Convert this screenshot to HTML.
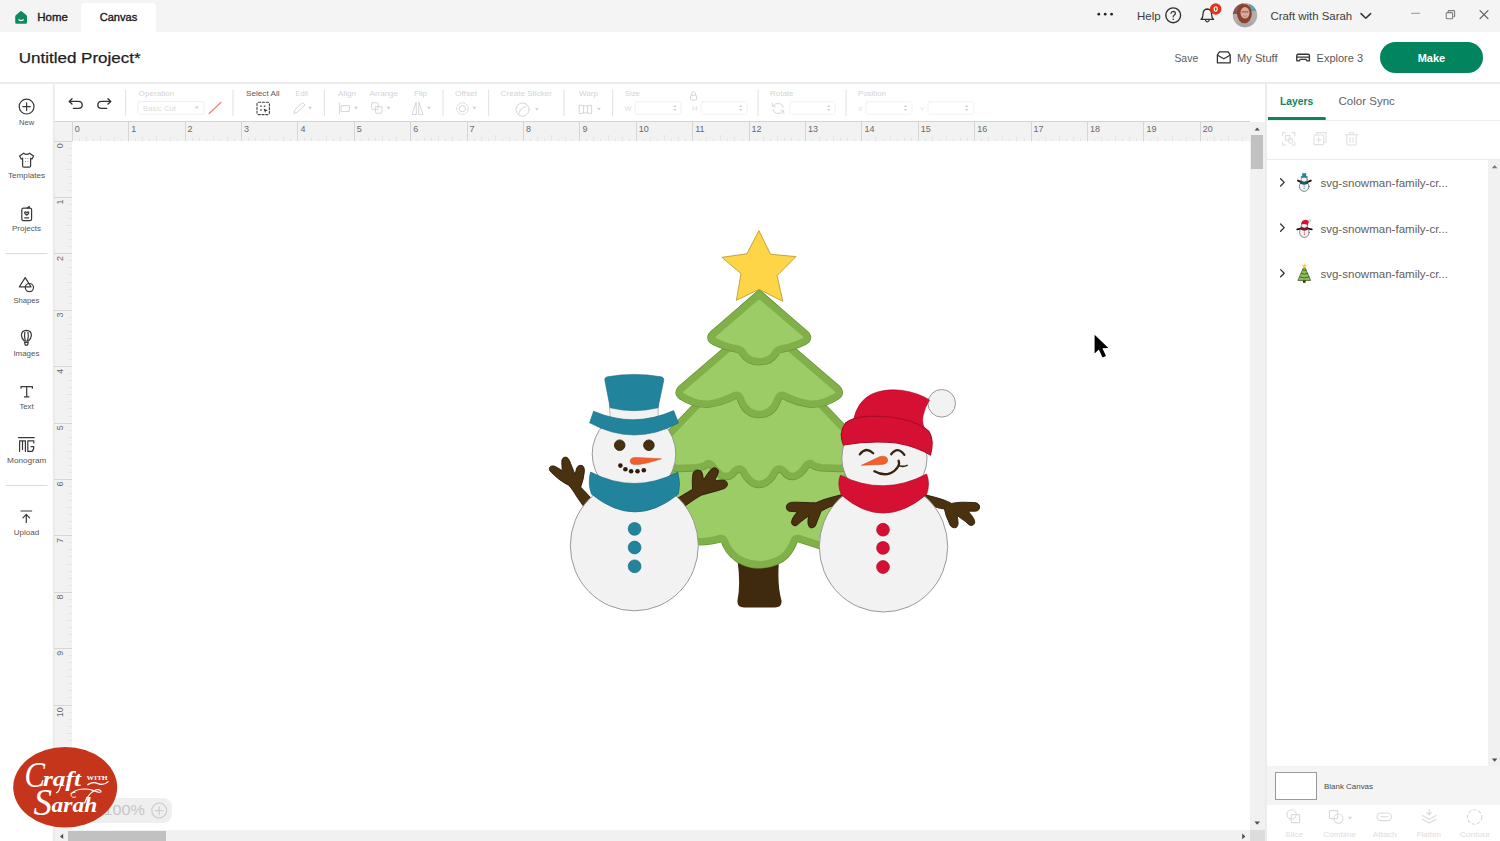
<!DOCTYPE html>
<html>
<head>
<meta charset="utf-8">
<title>Canvas</title>
<style>
*{box-sizing:border-box;margin:0;padding:0}
html,body{width:1500px;height:841px;overflow:hidden;background:#fff}
body{font-family:"Liberation Sans",sans-serif;color:#222;position:relative}
.abs{position:absolute}
.t{position:absolute;white-space:nowrap;line-height:1}
/* top bar */
#topbar{left:0;top:0;width:1500px;height:32px;background:#f4f4f4}
#tabcanvas{left:81px;top:3px;width:75px;height:29px;background:#fff;border-radius:4px 4px 0 0}
/* header */
#header{left:0;top:32px;width:1500px;height:51px;background:#fff}
#hline{left:0;top:82px;width:1500px;height:2px;background:#ebebeb}
#make{left:1380px;top:42px;width:103px;height:31px;border-radius:16px;background:#02855e;color:#fff;font-weight:bold;font-size:12.5px;text-align:center;line-height:31px}
/* sidebar */
#side{left:0;top:84px;width:54px;height:757px;background:#fff}
.sl{position:absolute;left:0;width:53px;text-align:center;font-size:7.5px;color:#4a4a4a;line-height:1}
.sdiv{position:absolute;left:6px;width:41px;height:1px;background:#dcdcdc}
/* toolbar */
#tool{left:54px;top:84px;width:1212px;height:37px;background:#fff}
#tline{left:54px;top:121px;width:1196px;height:1px;background:#d4d4d4}
.tl{position:absolute;font-size:7.5px;color:#cfcfcf;line-height:1;white-space:nowrap}
.tsep{position:absolute;top:90px;width:1px;height:26px;background:#e3e3e3}
/* rulers */
#rtop{left:54px;top:122px;width:1196px;height:19px;background:#f2f2f2}
#rleft{left:54px;top:122px;width:18px;height:708px;background:#f2f2f2}
/* canvas */
#canvas{left:72px;top:141px;width:1178px;height:689px;background:#fff}
#vscroll{left:1250px;top:122px;width:15px;height:708px;background:#f1f1f1}
#vthumb{left:1251px;top:135px;width:12px;height:34px;background:#c1c1c1}
#hscroll{left:54px;top:830px;width:1196px;height:11px;background:#f1f1f1}
#hthumb{left:68px;top:831px;width:98px;height:10px;background:#c1c1c1}
#corner{left:1250px;top:830px;width:15px;height:11px;background:#dcdcdc}
/* right panel */
#panel{left:1265px;top:84px;width:235px;height:757px;background:#fff;border-left:2px solid #ececec}
#layersul{left:1268px;top:117.3px;width:58.3px;height:2.7px;background:#0a8560;border-radius:0 1.5px 1.5px 0}
#pline1{left:1267px;top:120px;width:233px;height:1px;background:#ededed}
#pline2{left:1267px;top:159px;width:233px;height:1px;background:#ebebeb}
#lscroll{left:1488px;top:160px;width:12px;height:606px;background:#f1f1f1}
#blank{left:1267px;top:766px;width:233px;height:39px;background:#f4f4f4}
#blankbox{left:1274.6px;top:771.6px;width:42.4px;height:28.4px;background:#fff;border:1.3px solid #9a9a9a}
.lname{position:absolute;left:1320px;font-size:10.5px;color:#4c4c4c;white-space:nowrap;line-height:1}
.bl{position:absolute;font-size:7.5px;color:#d6d6d6;line-height:1;text-align:center;width:50px}
</style>
</head>
<body>
<!-- TOPBAR -->
<div id="topbar" class="abs"></div>
<div id="tabcanvas" class="abs"></div>
<div id="header" class="abs"></div>
<div id="hline" class="abs"></div>
<div id="side" class="abs"></div>
<div id="tool" class="abs"></div>
<div id="tline" class="abs"></div>
<div id="canvas" class="abs"></div>
<div id="rtop" class="abs"></div>
<div id="rleft" class="abs"></div>
<div id="vscroll" class="abs"></div>
<div id="vthumb" class="abs"></div>
<div id="hscroll" class="abs"></div>
<div id="hthumb" class="abs"></div>
<div id="corner" class="abs"></div>
<div id="panel" class="abs"></div>
<div id="layersul" class="abs"></div>
<div id="pline1" class="abs"></div>
<div id="pline2" class="abs"></div>
<div id="lscroll" class="abs"></div>
<div id="blank" class="abs"></div>
<div id="blankbox" class="abs"></div>
<div id="make" class="abs"></div>
<div id="zoompill" class="abs" style="left:76px;top:797.6px;width:96px;height:25.4px;border-radius:9px;background:#efefef"></div>

<svg class="abs" style="left:0;top:0" width="1500" height="841" viewBox="0 0 1500 841" font-family="Liberation Sans, sans-serif">
<text x="37.3" y="21.0" font-size="10.5" fill="#1c1c1c" textLength="30.60" lengthAdjust="spacingAndGlyphs" stroke="#1c1c1c" stroke-width="0.35">Home</text>
<text x="99.7" y="21.0" font-size="10.5" fill="#1c1c1c" textLength="37.60" lengthAdjust="spacingAndGlyphs" stroke="#1c1c1c" stroke-width="0.35">Canvas</text>
<text x="18.7" y="62.7" font-size="15.31" fill="#1e1e1e" textLength="122.00" lengthAdjust="spacingAndGlyphs" stroke="#1e1e1e" stroke-width="0.25">Untitled Project*</text>
<text x="1137" y="19.7" font-size="10.3" fill="#3c3c3c" textLength="23.60" lengthAdjust="spacingAndGlyphs">Help</text>
<text x="1270.4" y="19.7" font-size="10.3" fill="#3c3c3c" textLength="81.80" lengthAdjust="spacingAndGlyphs">Craft with Sarah</text>
<text x="1174.4" y="61.9" font-size="10.6" fill="#606060" textLength="23.80" lengthAdjust="spacingAndGlyphs">Save</text>
<text x="1237" y="61.9" font-size="10.6" fill="#585858" textLength="40.60" lengthAdjust="spacingAndGlyphs">My Stuff</text>
<text x="1316.6" y="61.9" font-size="10.6" fill="#585858" textLength="46.50" lengthAdjust="spacingAndGlyphs">Explore 3</text>
<text x="1417.7" y="62.0" font-size="11" fill="#ffffff" textLength="27.40" lengthAdjust="spacingAndGlyphs" font-weight="bold">Make</text>
<text x="1279.9" y="104.9" font-size="10.4" fill="#0c8661" textLength="33.40" lengthAdjust="spacingAndGlyphs" font-weight="bold">Layers</text>
<text x="1338.5" y="104.9" font-size="10.4" fill="#626262" textLength="56.40" lengthAdjust="spacingAndGlyphs">Color Sync</text>
<text x="1320.4" y="187.2" font-size="11.4" fill="#606060" textLength="127.60" lengthAdjust="spacingAndGlyphs">svg-snowman-family-cr...</text>
<text x="1320.4" y="232.5" font-size="11.4" fill="#606060" textLength="127.60" lengthAdjust="spacingAndGlyphs">svg-snowman-family-cr...</text>
<text x="1320.4" y="278.1" font-size="11.4" fill="#606060" textLength="127.60" lengthAdjust="spacingAndGlyphs">svg-snowman-family-cr...</text>
<text x="1324" y="788.8" font-size="7.15" fill="#4a4a4a" textLength="49.00" lengthAdjust="spacingAndGlyphs">Blank Canvas</text>
<text x="1285.3" y="836.5" font-size="7.35" fill="#dddddd" textLength="17.70" lengthAdjust="spacingAndGlyphs">Slice</text>
<text x="1323.3" y="836.5" font-size="7.35" fill="#dddddd" textLength="32.70" lengthAdjust="spacingAndGlyphs">Combine</text>
<text x="1372.5" y="836.5" font-size="7.68" fill="#dddddd" textLength="24.20" lengthAdjust="spacingAndGlyphs">Attach</text>
<text x="1416.7" y="836.5" font-size="7.09" fill="#dddddd" textLength="24.10" lengthAdjust="spacingAndGlyphs">Flatten</text>
<text x="1459.7" y="836.5" font-size="7.67" fill="#dddddd" textLength="30.30" lengthAdjust="spacingAndGlyphs">Contour</text>
<text x="19.1" y="124.9" font-size="6.84" fill="#555" textLength="15.20" lengthAdjust="spacingAndGlyphs">New</text>
<text x="8" y="177.7" font-size="7.33" fill="#555" textLength="37.10" lengthAdjust="spacingAndGlyphs">Templates</text>
<text x="12" y="230.9" font-size="7.2" fill="#555" textLength="28.90" lengthAdjust="spacingAndGlyphs">Projects</text>
<text x="13.4" y="302.9" font-size="6.9" fill="#555" textLength="26.00" lengthAdjust="spacingAndGlyphs">Shapes</text>
<text x="13.4" y="356.3" font-size="7.14" fill="#555" textLength="26.00" lengthAdjust="spacingAndGlyphs">Images</text>
<text x="19.4" y="409" font-size="7.02" fill="#555" textLength="14.30" lengthAdjust="spacingAndGlyphs">Text</text>
<text x="7.1" y="462.9" font-size="7.38" fill="#555" textLength="39.20" lengthAdjust="spacingAndGlyphs">Monogram</text>
<text x="13.7" y="534.9" font-size="7.21" fill="#555" textLength="25.40" lengthAdjust="spacingAndGlyphs">Upload</text>
<text x="138.6" y="95.6" font-size="7.34" fill="#d4d4d4" textLength="35.80" lengthAdjust="spacingAndGlyphs">Operation</text>
<text x="143" y="110.6" font-size="6.94" fill="#dcdcdc" textLength="33.00" lengthAdjust="spacingAndGlyphs">Basic Cut</text>
<text x="246" y="95.6" font-size="7.35" fill="#5a5a5a" textLength="33.60" lengthAdjust="spacingAndGlyphs">Select All</text>
<text x="295.6" y="95.6" font-size="6.48" fill="#d4d4d4" textLength="12.40" lengthAdjust="spacingAndGlyphs">Edit</text>
<text x="338" y="95.6" font-size="7.28" fill="#d4d4d4" textLength="18.00" lengthAdjust="spacingAndGlyphs">Align</text>
<text x="369.6" y="95.6" font-size="7.18" fill="#d4d4d4" textLength="28.40" lengthAdjust="spacingAndGlyphs">Arrange</text>
<text x="414" y="95.6" font-size="7.26" fill="#d4d4d4" textLength="13.00" lengthAdjust="spacingAndGlyphs">Flip</text>
<text x="455" y="95.6" font-size="7.47" fill="#d4d4d4" textLength="22.00" lengthAdjust="spacingAndGlyphs">Offset</text>
<text x="500.6" y="95.6" font-size="7.3" fill="#d4d4d4" textLength="51.40" lengthAdjust="spacingAndGlyphs">Create Sticker</text>
<text x="579" y="95.6" font-size="7.27" fill="#d4d4d4" textLength="19.00" lengthAdjust="spacingAndGlyphs">Warp</text>
<text x="624.7" y="95.6" font-size="7.03" fill="#d4d4d4" textLength="15.20" lengthAdjust="spacingAndGlyphs">Size</text>
<text x="624.7" y="110.6" font-size="6.29" fill="#dcdcdc" textLength="6.60" lengthAdjust="spacingAndGlyphs">W</text>
<text x="692" y="110.6" font-size="6.85" fill="#dcdcdc" textLength="5.50" lengthAdjust="spacingAndGlyphs">H</text>
<text x="770" y="95.6" font-size="7.18" fill="#d4d4d4" textLength="23.50" lengthAdjust="spacingAndGlyphs">Rotate</text>
<text x="858" y="95.6" font-size="7.08" fill="#d4d4d4" textLength="28.00" lengthAdjust="spacingAndGlyphs">Position</text>
<text x="858" y="110.6" font-size="6.07" fill="#dcdcdc" textLength="4.50" lengthAdjust="spacingAndGlyphs">X</text>
<text x="920" y="110.6" font-size="6.07" fill="#dcdcdc" textLength="4.50" lengthAdjust="spacingAndGlyphs">Y</text>
<text x="103.5" y="815.1" font-size="14.53" fill="#c6c6c6" textLength="41.30" lengthAdjust="spacingAndGlyphs">100%</text>
</svg>

<svg class="abs" style="left:0;top:0" width="1500" height="841" viewBox="0 0 1500 841" fill="none" stroke-linecap="round" stroke-linejoin="round">
<rect x="52.9" y="84" width="1.7" height="757" fill="#e9e9e9"/>
<path d="M15.2 16.6 Q15.2 15.6 16 15 L20 11.4 Q21 10.5 22 11.4 L26.2 15 Q27 15.6 27 16.6 L27 22.4 Q27 23.8 25.6 23.8 L16.6 23.8 Q15.2 23.8 15.2 22.4 Z" fill="#0f8a60"/>
<path d="M19 19.8 Q21.1 21.4 23.2 19.8" stroke="#fff" stroke-width="1.3"/>
<circle cx="1098.8" cy="14.2" r="1.35" fill="#222"/>
<circle cx="1105.2" cy="14.2" r="1.35" fill="#222"/>
<circle cx="1111.6" cy="14.2" r="1.35" fill="#222"/>
<circle cx="1173.2" cy="15.3" r="7.4" stroke="#303030" stroke-width="1.4"/>
<path d="M1171 13.4 Q1171.2 11.4 1173.3 11.4 Q1175.4 11.5 1175.4 13.3 Q1175.4 14.5 1174.1 15.3 Q1173.2 15.9 1173.2 17" stroke="#333" stroke-width="1.2"/><circle cx="1173.2" cy="19.3" r="0.8" fill="#333"/>
<path d="M1201 19.4 Q1203 17.6 1203 14.4 Q1203 9.2 1207.3 9 Q1211.6 9.2 1211.6 14.4 Q1211.6 17.6 1213.6 19.4 Z" stroke="#333" stroke-width="1.3"/>
<path d="M1205.6 20.6 Q1207.3 23 1209 20.6" stroke="#333" stroke-width="1.3"/>
<circle cx="1215.7" cy="9" r="5.8" fill="#e2341d"/>
<ellipse cx="1215.7" cy="9" rx="1.5" ry="2.2" stroke="#fff" stroke-width="1.1"/>
<filter id="avb" x="-20%" y="-20%" width="140%" height="140%"><feGaussianBlur stdDeviation="0.75"/></filter>
<clipPath id="av"><circle cx="1245" cy="15.2" r="12.2"/></clipPath><g clip-path="url(#av)"><g filter="url(#avb)"><rect x="1230" y="0" width="30" height="31" fill="#b4adaa"/><rect x="1230" y="0" width="13" height="14" fill="#84555a"/><rect x="1249" y="0" width="12" height="11" fill="#6a9ba8"/><ellipse cx="1245" cy="29.5" rx="12" ry="9" fill="#a9a6a5"/><ellipse cx="1244.4" cy="13.6" rx="7.4" ry="9.6" fill="#8a432b"/><ellipse cx="1245" cy="12.8" rx="4.5" ry="5.8" fill="#dcab97"/><path d="M1242 11.9 H1248" stroke="#6a4a40" stroke-width="0.9"/><path d="M1243.6 16 Q1245 16.8 1246.4 16" stroke="#b06a5c" stroke-width="0.7" fill="none"/></g></g>
<path d="M1361 13.6 L1365.8 18.2 L1370.6 13.6" stroke="#333" stroke-width="1.5"/>
<path d="M1411.6 13.4 H1419.6" stroke="#a8a8a8" stroke-width="1.1"/>
<rect x="1446.2" y="12.6" width="6.4" height="6.2" rx="1" stroke="#7c7c7c" stroke-width="1.1"/><path d="M1448.2 12.4 V11.2 Q1448.2 10.6 1448.8 10.6 H1453.8 Q1454.6 10.6 1454.6 11.4 V16.2 Q1454.6 16.8 1453.8 16.8" stroke="#7c7c7c" stroke-width="1.1"/>
<path d="M1480 10.6 L1488 18.6 M1488 10.6 L1480 18.6" stroke="#5c5c5c" stroke-width="1.2"/>
<path d="M1217.4 55 L1219.4 51.8 H1228.2 L1230.2 55 V62.8 H1217.4 Z" stroke="#333" stroke-width="1.3"/><path d="M1217.6 55.2 L1223.8 58.8 L1230 55.2" stroke="#333" stroke-width="1.3"/>
<path d="M1296.8 60.8 V55.6 Q1296.8 54.2 1298.2 54.2 H1308 Q1309.4 54.2 1309.4 55.6 V60.8 H1307 L1306 59.4 H1300.2 L1299.2 60.8 Z" stroke="#333" stroke-width="1.35"/><path d="M1297 57.2 H1309.2" stroke="#333" stroke-width="1.3"/>
<circle cx="26.6" cy="106.6" r="7.4" stroke="#383838" stroke-width="1.2"/><path d="M26.6 102.8 V110.4 M22.8 106.6 H30.4" stroke="#383838" stroke-width="1.2"/>
<path d="M23.6 153.2 Q26.6 155.4 29.6 153.2 L33.6 156 L32 159 L30.6 158.2 V166 Q30.6 167.2 29.4 167.2 H23.8 Q22.6 167.2 22.6 166 V158.2 L21.2 159 L19.6 156 Z" stroke="#383838" stroke-width="1.2"/>
<g fill="#777"><circle cx="25.4" cy="158.4" r="0.5"/><circle cx="27.8" cy="158.4" r="0.5"/><circle cx="25.4" cy="161.4" r="0.5"/><circle cx="27.8" cy="161.4" r="0.5"/></g>
<rect x="21.8" y="208.2" width="9.8" height="12.4" rx="1.6" stroke="#383838" stroke-width="1.2"/><path d="M27.4 208 L29.2 206.4 V208" stroke="#383838" stroke-width="1.2"/><path d="M24.6 212.6 Q24.8 211.6 25.8 212 L26.7 212.8 L27.6 212 Q28.6 211.6 28.8 212.6 Q28.8 214 26.7 215.2 Q24.6 214 24.6 212.6 Z" stroke="#383838" stroke-width="1.2" stroke-width="1"/><path d="M24.8 217.8 H28.6" stroke="#383838" stroke-width="1.2"/>
<path d="M25.2 277.6 L31 286.8 H19.4 Z" stroke="#383838" stroke-width="1.2"/><circle cx="29.4" cy="287.6" r="4.1" stroke="#383838" stroke-width="1.2"/>
<path d="M26.4 330.4 Q31.4 330.6 31.4 335.4 Q31.2 338.6 28.4 341 H24.4 Q21.6 338.6 21.4 335.4 Q21.4 330.6 26.4 330.4 Z" stroke="#383838" stroke-width="1.2"/><path d="M24.8 332.4 Q24 335.6 25.2 340.6 M28 332.4 Q28.8 335.6 27.6 340.6" stroke="#383838" stroke-width="1.2" stroke-width="0.9"/><path d="M24.6 342.4 H28.2 L27.6 345.2 H25.2 Z" stroke="#383838" stroke-width="1.2"/>
<path d="M21 388.2 V386.6 H32.4 V388.2 M26.7 386.8 V396.6 M24.4 396.8 H29" stroke="#383838" stroke-width="1.2" stroke-width="1.3"/>
<path d="M18.4 437.6 H34.2" stroke="#383838" stroke-width="1.2"/><path d="M19.6 451.4 V440.8 H25.4 V451.4 M22.5 441 V449.6" stroke="#383838" stroke-width="1.2"/><path d="M33.8 443 V440.8 H27.8 V451.4 H32 Q33.8 450.6 33.8 446.6 H31" stroke="#383838" stroke-width="1.2"/>
<path d="M21 511 H31.6" stroke="#383838" stroke-width="1.2" stroke-width="1.3"/><path d="M26.3 522.4 V514.6 M23 517.8 L26.3 514.4 L29.6 517.8" stroke="#383838" stroke-width="1.2" stroke-width="1.3"/>
<path d="M5.8 253.6 H47" stroke="#d9d9d9" stroke-width="1"/><path d="M5.8 485.4 H47" stroke="#d9d9d9" stroke-width="1"/>
<path d="M72 98.8 L69.2 101.4 L72 104 M69.6 101.4 H78.4 Q82.2 101.6 82.2 104.9 Q82.2 108.2 78.4 108.4 H73.4" stroke="#333" stroke-width="1.35"/>
<path d="M108 98.8 L110.8 101.4 L108 104 M110.4 101.4 H101.6 Q97.8 101.6 97.8 104.9 Q97.8 108.2 101.6 108.4 H106.6" stroke="#333" stroke-width="1.35"/>
<path d="M125.6 90 V115.6" stroke="#e4e4e4" stroke-width="1.1"/>
<path d="M233 90 V115.6" stroke="#e4e4e4" stroke-width="1.1"/>
<path d="M324.4 90 V115.6" stroke="#e4e4e4" stroke-width="1.1"/>
<path d="M443 90 V115.6" stroke="#e4e4e4" stroke-width="1.1"/>
<path d="M488.6 90 V115.6" stroke="#e4e4e4" stroke-width="1.1"/>
<path d="M564 90 V115.6" stroke="#e4e4e4" stroke-width="1.1"/>
<path d="M612.6 90 V115.6" stroke="#e4e4e4" stroke-width="1.1"/>
<path d="M758 90 V115.6" stroke="#e4e4e4" stroke-width="1.1"/>
<path d="M846 90 V115.6" stroke="#e4e4e4" stroke-width="1.1"/>
<rect x="138" y="101.6" width="66" height="12.6" rx="1.5" stroke="#efefef" stroke-width="1"/>
<path d="M194.8 106.4 H198.8 L196.8 109 Z" fill="#cfcfcf"/>
<path d="M209.2 113.4 L220.8 102.4" stroke="#ee8a7c" stroke-width="1.4"/>
<rect x="257" y="102.2" width="12.4" height="12.4" rx="1.6" stroke="#444" stroke-width="1.1" stroke-dasharray="2.2 1.6"/><g fill="#666"><circle cx="261" cy="106.2" r="0.9"/><circle cx="264.6" cy="106.2" r="0.9"/><circle cx="261" cy="110" r="0.9"/></g><path d="M263.6 108.6 L268 110.4 L265.8 111 L265.2 113 Z" fill="#333"/>
<path d="M294 113 L295 109.6 L302.6 102.6 L305 105 L297.4 112 Z" stroke="#d6d6d6" stroke-width="1"/>
<path d="M308.2 106.8 H311.8 L310 109.4 Z" fill="#cfcfcf"/>
<path d="M339.4 103 V114 M341.4 105.6 H349.4 V111.4 H341.4 Z" stroke="#d6d6d6" stroke-width="1"/>
<path d="M354.2 106.8 H357.8 L356 109.4 Z" fill="#cfcfcf"/>
<rect x="371.6" y="102.8" width="6.6" height="6.6" rx="0.8" stroke="#d6d6d6" stroke-width="1"/><rect x="375.4" y="106.6" width="6.6" height="6.6" rx="0.8" stroke="#d6d6d6" stroke-width="1"/>
<path d="M386.8 106.8 H390.40000000000003 L388.6 109.4 Z" fill="#cfcfcf"/>
<path d="M416 102.6 L412 114.4 H416 Z M419 102.6 L423 114.4 H419 Z" stroke="#d6d6d6" stroke-width="1"/>
<path d="M427.2 106.8 H430.8 L429 109.4 Z" fill="#cfcfcf"/>
<circle cx="462.4" cy="108.6" r="3.2" stroke="#d6d6d6" stroke-width="1"/><circle cx="462.4" cy="108.6" r="5.8" stroke="#d6d6d6" stroke-width="1" stroke-dasharray="1.8 1.6"/>
<path d="M472.59999999999997 106.8 H476.2 L474.4 109.4 Z" fill="#cfcfcf"/>
<circle cx="522.6" cy="109.6" r="6.6" stroke="#d6d6d6" stroke-width="1"/><path d="M519 113.6 Q520 108 526 106.4" stroke="#d6d6d6" stroke-width="1"/>
<path d="M535.2 108.2 H538.8 L537 110.80000000000001 Z" fill="#cfcfcf"/>
<path d="M579.6 105.2 Q585.6 107 591.6 105.2 V113.6 Q585.6 111.8 579.6 113.6 Z M583.6 106 V112.8 M587.6 106 V112.8" stroke="#d6d6d6" stroke-width="1"/>
<path d="M597.2 108.0 H600.8 L599 110.60000000000001 Z" fill="#cfcfcf"/>
<path d="M673.0999999999999 107 L674.8 105 L676.5 107 Z M673.0999999999999 109 L674.8 111 L676.5 109 Z" fill="#cdcdcd"/>
<path d="M739.0 107 L740.7 105 L742.4000000000001 107 Z M739.0 109 L740.7 111 L742.4000000000001 109 Z" fill="#cdcdcd"/>
<path d="M827.0 107 L828.7 105 L830.4000000000001 107 Z M827.0 109 L828.7 111 L830.4000000000001 109 Z" fill="#cdcdcd"/>
<path d="M903.8 107 L905.5 105 L907.2 107 Z M903.8 109 L905.5 111 L907.2 109 Z" fill="#cdcdcd"/>
<path d="M965.0999999999999 107 L966.8 105 L968.5 107 Z M965.0999999999999 109 L966.8 111 L968.5 109 Z" fill="#cdcdcd"/>
<rect x="635" y="101.8" width="46" height="12.4" rx="1.5" stroke="#f1f1f1" stroke-width="1"/>
<rect x="701" y="101.8" width="46" height="12.4" rx="1.5" stroke="#f1f1f1" stroke-width="1"/>
<rect x="790" y="101.8" width="45" height="12.4" rx="1.5" stroke="#f1f1f1" stroke-width="1"/>
<rect x="866" y="101.8" width="46" height="12.4" rx="1.5" stroke="#f1f1f1" stroke-width="1"/>
<rect x="928" y="101.8" width="46" height="12.4" rx="1.5" stroke="#f1f1f1" stroke-width="1"/>
<rect x="690.6" y="95.2" width="6" height="4.8" rx="0.8" stroke="#d6d6d6" stroke-width="1"/><path d="M691.8 95 V93.6 Q691.8 91.6 693.6 91.6 Q695.4 91.6 695.4 93.6 V95" stroke="#d6d6d6" stroke-width="1"/>
<path d="M772.6 106 Q775.4 102.4 779.8 103.6 Q782.6 104.6 783.4 107.2 M783.6 111 Q781 114.6 776.6 113.4 Q773.6 112.4 772.8 109.8 M772.4 103.2 V106.2 H775.4 M783.8 113.8 V110.8 H780.8" stroke="#d6d6d6" stroke-width="1"/>
<path d="M1254.6 130.6 L1257.2 127.6 L1259.8 130.6 Z" fill="#505050"/>
<path d="M1254.4 821.6 L1257.2 824.8 L1260 821.6 Z" fill="#505050"/>
<path d="M63.2 833.8 L60 836.4 L63.2 839 Z" fill="#505050"/>
<path d="M1242.2 833.6 L1245.4 836.4 L1242.2 839.2 Z" fill="#505050"/>
<path d="M1491.8 168.2 L1494.6 165 L1497.4 168.2 Z" fill="#7a7a7a"/>
<path d="M1491.8 758.6 L1494.6 761.8 L1497.4 758.6 Z" fill="#505050"/>
<path d="M1282.6 135.4 V132.6 H1285.4 M1292 132.6 H1294.8 V135.4 M1294.8 142.2 V145 H1292 M1285.4 145 H1282.6 V142.2" stroke="#e0e0e0" stroke-width="1.1"/><rect x="1285.4" y="135.6" width="4.6" height="4.6" stroke="#e0e0e0" stroke-width="1.1"/><circle cx="1290.4" cy="140.8" r="2.4" stroke="#e0e0e0" stroke-width="1.1"/>
<rect x="1314" y="135" width="9.6" height="9.6" rx="1" stroke="#e0e0e0" stroke-width="1.1"/><path d="M1316.4 134.8 V132.6 H1326 V142.2 H1324 M1318.8 137.6 V142 M1316.6 139.8 H1321" stroke="#e0e0e0" stroke-width="1.1"/>
<path d="M1345.4 134.8 H1357.6 M1349.4 134.6 V132.8 H1353.6 V134.6 M1346.8 135 V144 Q1346.8 145 1347.8 145 H1355.2 Q1356.2 145 1356.2 144 V135 M1350 137.6 V142.2 M1353 137.6 V142.2" stroke="#e0e0e0" stroke-width="1.1"/>
<path d="M1280.6 178.8 L1284.2 182.4 L1280.6 186.0" stroke="#333" stroke-width="1.3"/>
<path d="M1280.6 224.0 L1284.2 227.6 L1280.6 231.2" stroke="#333" stroke-width="1.3"/>
<path d="M1280.6 269.59999999999997 L1284.2 273.2 L1280.6 276.8" stroke="#333" stroke-width="1.3"/>
<g><path d="M1301 182 L1298 180.6 M1307.6 182 L1310.8 180.6" stroke="#1c1408" stroke-width="1.9"/><ellipse cx="1304.2" cy="186.4" rx="4.8" ry="5" fill="#f4f4f4" stroke="#666" stroke-width="0.8"/><circle cx="1304.2" cy="179.4" r="3.2" fill="#f4f4f4" stroke="#666" stroke-width="0.7"/><path d="M1300.6 181 Q1304.2 183.2 1307.8 181 V183.4 Q1304.2 185.6 1300.6 183.4 Z" fill="#17627a" stroke="#222" stroke-width="0.5"/><rect x="1302.2" y="173.2" width="4" height="3.6" fill="#21849c"/><rect x="1300.8" y="176.2" width="6.8" height="1.6" fill="#21849c"/><circle cx="1304.2" cy="186" r="0.6" fill="#21849c"/><circle cx="1304.2" cy="188.2" r="0.6" fill="#21849c"/></g>
<g><path d="M1301 228.6 L1297.2 229.4 M1308 228.6 L1311.8 229.4" stroke="#1c1408" stroke-width="1.9"/><ellipse cx="1304.4" cy="232.4" rx="4.8" ry="5" fill="#f4f4f4" stroke="#666" stroke-width="0.8"/><circle cx="1304.4" cy="225.6" r="3.2" fill="#f4f4f4" stroke="#666" stroke-width="0.7"/><path d="M1301 227 Q1304.4 229.2 1307.8 227 V229.4 Q1304.4 231.6 1301 229.4 Z" fill="#a80c28" stroke="#222" stroke-width="0.5"/><path d="M1301 224.6 Q1301.4 220 1305.4 219.8 Q1308 220 1309 221.4 L1307.8 225 Q1304 223.4 1301 224.6 Z" fill="#d51033"/><circle cx="1309.4" cy="220.8" r="1.1" fill="#eee" stroke="#888" stroke-width="0.4"/><circle cx="1304.4" cy="232" r="0.6" fill="#d51033"/><circle cx="1304.4" cy="234.2" r="0.6" fill="#d51033"/></g>
<g stroke="#2d3d16" stroke-width="0.7"><rect x="1303" y="280" width="2.6" height="2.8" fill="#3f2a10" stroke="none"/><path d="M1304.4 266.4 L1310.6 280.4 H1298.2 Z" fill="#8cc152"/><path d="M1301.2 273.4 Q1304.4 275.4 1307.6 273.4 M1299.8 277 Q1304.4 279 1309 277 M1302.6 270 Q1304.4 271 1306.2 270" fill="none"/><path d="M1304.4 263 L1305.2 265 L1307.2 265.2 L1305.6 266.6 L1306.2 268.6 L1304.4 267.4 L1302.6 268.6 L1303.2 266.6 L1301.6 265.2 L1303.6 265 Z" fill="#fcd23f" stroke="none"/></g>
<circle cx="1291.6" cy="814.4" r="4.6" stroke="#dadada" stroke-width="1.1"/><rect x="1291.2" y="814.6" width="8.4" height="8" rx="0.8" stroke="#dadada" stroke-width="1.1"/>
<rect x="1329.4" y="810.6" width="8.2" height="8" rx="0.8" stroke="#dadada" stroke-width="1.1"/><circle cx="1338.4" cy="818.6" r="4.6" stroke="#dadada" stroke-width="1.1"/>
<path d="M1348.2 816.8 H1351.8 L1350 819.4 Z" fill="#d0d0d0"/>
<rect x="1377" y="813" width="14.4" height="7.6" rx="3.8" stroke="#dadada" stroke-width="1.1"/><path d="M1381 816.8 H1388" stroke="#dadada" stroke-width="1.1"/>
<path d="M1429.2 809.6 V814.4 M1427 812.6 L1429.2 814.8 L1431.4 812.6 M1422.4 815.6 L1429.2 819.2 L1436 815.6 M1422.4 819.4 L1429.2 823 L1436 819.4" stroke="#dadada" stroke-width="1.1"/>
<circle cx="1474.6" cy="817" r="7.2" stroke="#dadada" stroke-width="1.1" stroke-dasharray="3 2.4" stroke-width="1.3"/>
<circle cx="159.2" cy="810.6" r="7.4" stroke="#cfcfcf" stroke-width="1.3"/><path d="M159.2 806.6 V814.6 M155.2 810.6 H163.2" stroke="#cfcfcf" stroke-width="1.3"/>
</svg>

<svg class="abs" style="left:0;top:0" width="1500" height="841" viewBox="0 0 1500 841">
<g stroke="#e5e5e5" stroke-width="1" shape-rendering="crispEdges">
<line x1="72.2" y1="122" x2="72.2" y2="141" stroke="#d6d6d6"/>
<line x1="79.2" y1="138" x2="79.2" y2="141"/>
<line x1="86.3" y1="137" x2="86.3" y2="141"/>
<line x1="93.3" y1="138" x2="93.3" y2="141"/>
<line x1="100.4" y1="135" x2="100.4" y2="141"/>
<line x1="107.5" y1="138" x2="107.5" y2="141"/>
<line x1="114.5" y1="137" x2="114.5" y2="141"/>
<line x1="121.6" y1="138" x2="121.6" y2="141"/>
<line x1="128.6" y1="122" x2="128.6" y2="141" stroke="#d6d6d6"/>
<line x1="135.7" y1="138" x2="135.7" y2="141"/>
<line x1="142.7" y1="137" x2="142.7" y2="141"/>
<line x1="149.8" y1="138" x2="149.8" y2="141"/>
<line x1="156.8" y1="135" x2="156.8" y2="141"/>
<line x1="163.8" y1="138" x2="163.8" y2="141"/>
<line x1="170.9" y1="137" x2="170.9" y2="141"/>
<line x1="177.9" y1="138" x2="177.9" y2="141"/>
<line x1="185.0" y1="122" x2="185.0" y2="141" stroke="#d6d6d6"/>
<line x1="192.1" y1="138" x2="192.1" y2="141"/>
<line x1="199.1" y1="137" x2="199.1" y2="141"/>
<line x1="206.2" y1="138" x2="206.2" y2="141"/>
<line x1="213.2" y1="135" x2="213.2" y2="141"/>
<line x1="220.2" y1="138" x2="220.2" y2="141"/>
<line x1="227.3" y1="137" x2="227.3" y2="141"/>
<line x1="234.3" y1="138" x2="234.3" y2="141"/>
<line x1="241.4" y1="122" x2="241.4" y2="141" stroke="#d6d6d6"/>
<line x1="248.4" y1="138" x2="248.4" y2="141"/>
<line x1="255.5" y1="137" x2="255.5" y2="141"/>
<line x1="262.5" y1="138" x2="262.5" y2="141"/>
<line x1="269.6" y1="135" x2="269.6" y2="141"/>
<line x1="276.6" y1="138" x2="276.6" y2="141"/>
<line x1="283.7" y1="137" x2="283.7" y2="141"/>
<line x1="290.8" y1="138" x2="290.8" y2="141"/>
<line x1="297.8" y1="122" x2="297.8" y2="141" stroke="#d6d6d6"/>
<line x1="304.9" y1="138" x2="304.9" y2="141"/>
<line x1="311.9" y1="137" x2="311.9" y2="141"/>
<line x1="318.9" y1="138" x2="318.9" y2="141"/>
<line x1="326.0" y1="135" x2="326.0" y2="141"/>
<line x1="333.1" y1="138" x2="333.1" y2="141"/>
<line x1="340.1" y1="137" x2="340.1" y2="141"/>
<line x1="347.2" y1="138" x2="347.2" y2="141"/>
<line x1="354.2" y1="122" x2="354.2" y2="141" stroke="#d6d6d6"/>
<line x1="361.2" y1="138" x2="361.2" y2="141"/>
<line x1="368.3" y1="137" x2="368.3" y2="141"/>
<line x1="375.3" y1="138" x2="375.3" y2="141"/>
<line x1="382.4" y1="135" x2="382.4" y2="141"/>
<line x1="389.4" y1="138" x2="389.4" y2="141"/>
<line x1="396.5" y1="137" x2="396.5" y2="141"/>
<line x1="403.6" y1="138" x2="403.6" y2="141"/>
<line x1="410.6" y1="122" x2="410.6" y2="141" stroke="#d6d6d6"/>
<line x1="417.6" y1="138" x2="417.6" y2="141"/>
<line x1="424.7" y1="137" x2="424.7" y2="141"/>
<line x1="431.7" y1="138" x2="431.7" y2="141"/>
<line x1="438.8" y1="135" x2="438.8" y2="141"/>
<line x1="445.8" y1="138" x2="445.8" y2="141"/>
<line x1="452.9" y1="137" x2="452.9" y2="141"/>
<line x1="459.9" y1="138" x2="459.9" y2="141"/>
<line x1="467.0" y1="122" x2="467.0" y2="141" stroke="#d6d6d6"/>
<line x1="474.1" y1="138" x2="474.1" y2="141"/>
<line x1="481.1" y1="137" x2="481.1" y2="141"/>
<line x1="488.1" y1="138" x2="488.1" y2="141"/>
<line x1="495.2" y1="135" x2="495.2" y2="141"/>
<line x1="502.2" y1="138" x2="502.2" y2="141"/>
<line x1="509.3" y1="137" x2="509.3" y2="141"/>
<line x1="516.4" y1="138" x2="516.4" y2="141"/>
<line x1="523.4" y1="122" x2="523.4" y2="141" stroke="#d6d6d6"/>
<line x1="530.4" y1="138" x2="530.4" y2="141"/>
<line x1="537.5" y1="137" x2="537.5" y2="141"/>
<line x1="544.5" y1="138" x2="544.5" y2="141"/>
<line x1="551.6" y1="135" x2="551.6" y2="141"/>
<line x1="558.6" y1="138" x2="558.6" y2="141"/>
<line x1="565.7" y1="137" x2="565.7" y2="141"/>
<line x1="572.8" y1="138" x2="572.8" y2="141"/>
<line x1="579.8" y1="122" x2="579.8" y2="141" stroke="#d6d6d6"/>
<line x1="586.8" y1="138" x2="586.8" y2="141"/>
<line x1="593.9" y1="137" x2="593.9" y2="141"/>
<line x1="600.9" y1="138" x2="600.9" y2="141"/>
<line x1="608.0" y1="135" x2="608.0" y2="141"/>
<line x1="615.0" y1="138" x2="615.0" y2="141"/>
<line x1="622.1" y1="137" x2="622.1" y2="141"/>
<line x1="629.1" y1="138" x2="629.1" y2="141"/>
<line x1="636.2" y1="122" x2="636.2" y2="141" stroke="#d6d6d6"/>
<line x1="643.2" y1="138" x2="643.2" y2="141"/>
<line x1="650.3" y1="137" x2="650.3" y2="141"/>
<line x1="657.4" y1="138" x2="657.4" y2="141"/>
<line x1="664.4" y1="135" x2="664.4" y2="141"/>
<line x1="671.5" y1="138" x2="671.5" y2="141"/>
<line x1="678.5" y1="137" x2="678.5" y2="141"/>
<line x1="685.6" y1="138" x2="685.6" y2="141"/>
<line x1="692.6" y1="122" x2="692.6" y2="141" stroke="#d6d6d6"/>
<line x1="699.6" y1="138" x2="699.6" y2="141"/>
<line x1="706.7" y1="137" x2="706.7" y2="141"/>
<line x1="713.8" y1="138" x2="713.8" y2="141"/>
<line x1="720.8" y1="135" x2="720.8" y2="141"/>
<line x1="727.9" y1="138" x2="727.9" y2="141"/>
<line x1="734.9" y1="137" x2="734.9" y2="141"/>
<line x1="742.0" y1="138" x2="742.0" y2="141"/>
<line x1="749.0" y1="122" x2="749.0" y2="141" stroke="#d6d6d6"/>
<line x1="756.0" y1="138" x2="756.0" y2="141"/>
<line x1="763.1" y1="137" x2="763.1" y2="141"/>
<line x1="770.1" y1="138" x2="770.1" y2="141"/>
<line x1="777.2" y1="135" x2="777.2" y2="141"/>
<line x1="784.2" y1="138" x2="784.2" y2="141"/>
<line x1="791.3" y1="137" x2="791.3" y2="141"/>
<line x1="798.4" y1="138" x2="798.4" y2="141"/>
<line x1="805.4" y1="122" x2="805.4" y2="141" stroke="#d6d6d6"/>
<line x1="812.4" y1="138" x2="812.4" y2="141"/>
<line x1="819.5" y1="137" x2="819.5" y2="141"/>
<line x1="826.5" y1="138" x2="826.5" y2="141"/>
<line x1="833.6" y1="135" x2="833.6" y2="141"/>
<line x1="840.6" y1="138" x2="840.6" y2="141"/>
<line x1="847.7" y1="137" x2="847.7" y2="141"/>
<line x1="854.8" y1="138" x2="854.8" y2="141"/>
<line x1="861.8" y1="122" x2="861.8" y2="141" stroke="#d6d6d6"/>
<line x1="868.9" y1="138" x2="868.9" y2="141"/>
<line x1="875.9" y1="137" x2="875.9" y2="141"/>
<line x1="883.0" y1="138" x2="883.0" y2="141"/>
<line x1="890.0" y1="135" x2="890.0" y2="141"/>
<line x1="897.1" y1="138" x2="897.1" y2="141"/>
<line x1="904.1" y1="137" x2="904.1" y2="141"/>
<line x1="911.2" y1="138" x2="911.2" y2="141"/>
<line x1="918.2" y1="122" x2="918.2" y2="141" stroke="#d6d6d6"/>
<line x1="925.2" y1="138" x2="925.2" y2="141"/>
<line x1="932.3" y1="137" x2="932.3" y2="141"/>
<line x1="939.4" y1="138" x2="939.4" y2="141"/>
<line x1="946.4" y1="135" x2="946.4" y2="141"/>
<line x1="953.5" y1="138" x2="953.5" y2="141"/>
<line x1="960.5" y1="137" x2="960.5" y2="141"/>
<line x1="967.6" y1="138" x2="967.6" y2="141"/>
<line x1="974.6" y1="122" x2="974.6" y2="141" stroke="#d6d6d6"/>
<line x1="981.6" y1="138" x2="981.6" y2="141"/>
<line x1="988.7" y1="137" x2="988.7" y2="141"/>
<line x1="995.8" y1="138" x2="995.8" y2="141"/>
<line x1="1002.8" y1="135" x2="1002.8" y2="141"/>
<line x1="1009.9" y1="138" x2="1009.9" y2="141"/>
<line x1="1016.9" y1="137" x2="1016.9" y2="141"/>
<line x1="1024.0" y1="138" x2="1024.0" y2="141"/>
<line x1="1031.0" y1="122" x2="1031.0" y2="141" stroke="#d6d6d6"/>
<line x1="1038.0" y1="138" x2="1038.0" y2="141"/>
<line x1="1045.1" y1="137" x2="1045.1" y2="141"/>
<line x1="1052.2" y1="138" x2="1052.2" y2="141"/>
<line x1="1059.2" y1="135" x2="1059.2" y2="141"/>
<line x1="1066.2" y1="138" x2="1066.2" y2="141"/>
<line x1="1073.3" y1="137" x2="1073.3" y2="141"/>
<line x1="1080.3" y1="138" x2="1080.3" y2="141"/>
<line x1="1087.4" y1="122" x2="1087.4" y2="141" stroke="#d6d6d6"/>
<line x1="1094.4" y1="138" x2="1094.4" y2="141"/>
<line x1="1101.5" y1="137" x2="1101.5" y2="141"/>
<line x1="1108.5" y1="138" x2="1108.5" y2="141"/>
<line x1="1115.6" y1="135" x2="1115.6" y2="141"/>
<line x1="1122.6" y1="138" x2="1122.6" y2="141"/>
<line x1="1129.7" y1="137" x2="1129.7" y2="141"/>
<line x1="1136.7" y1="138" x2="1136.7" y2="141"/>
<line x1="1143.8" y1="122" x2="1143.8" y2="141" stroke="#d6d6d6"/>
<line x1="1150.8" y1="138" x2="1150.8" y2="141"/>
<line x1="1157.9" y1="137" x2="1157.9" y2="141"/>
<line x1="1165.0" y1="138" x2="1165.0" y2="141"/>
<line x1="1172.0" y1="135" x2="1172.0" y2="141"/>
<line x1="1179.0" y1="138" x2="1179.0" y2="141"/>
<line x1="1186.1" y1="137" x2="1186.1" y2="141"/>
<line x1="1193.1" y1="138" x2="1193.1" y2="141"/>
<line x1="1200.2" y1="122" x2="1200.2" y2="141" stroke="#d6d6d6"/>
<line x1="1207.2" y1="138" x2="1207.2" y2="141"/>
<line x1="1214.3" y1="137" x2="1214.3" y2="141"/>
<line x1="1221.4" y1="138" x2="1221.4" y2="141"/>
<line x1="1228.4" y1="135" x2="1228.4" y2="141"/>
<line x1="1235.5" y1="138" x2="1235.5" y2="141"/>
<line x1="1242.5" y1="137" x2="1242.5" y2="141"/>
<line x1="54" y1="141.0" x2="72" y2="141.0" stroke="#d6d6d6"/>
<line x1="69" y1="148.1" x2="72" y2="148.1"/>
<line x1="68" y1="155.1" x2="72" y2="155.1"/>
<line x1="69" y1="162.2" x2="72" y2="162.2"/>
<line x1="66" y1="169.2" x2="72" y2="169.2"/>
<line x1="69" y1="176.2" x2="72" y2="176.2"/>
<line x1="68" y1="183.3" x2="72" y2="183.3"/>
<line x1="69" y1="190.3" x2="72" y2="190.3"/>
<line x1="54" y1="197.4" x2="72" y2="197.4" stroke="#d6d6d6"/>
<line x1="69" y1="204.5" x2="72" y2="204.5"/>
<line x1="68" y1="211.5" x2="72" y2="211.5"/>
<line x1="69" y1="218.6" x2="72" y2="218.6"/>
<line x1="66" y1="225.6" x2="72" y2="225.6"/>
<line x1="69" y1="232.7" x2="72" y2="232.7"/>
<line x1="68" y1="239.7" x2="72" y2="239.7"/>
<line x1="69" y1="246.8" x2="72" y2="246.8"/>
<line x1="54" y1="253.8" x2="72" y2="253.8" stroke="#d6d6d6"/>
<line x1="69" y1="260.9" x2="72" y2="260.9"/>
<line x1="68" y1="267.9" x2="72" y2="267.9"/>
<line x1="69" y1="274.9" x2="72" y2="274.9"/>
<line x1="66" y1="282.0" x2="72" y2="282.0"/>
<line x1="69" y1="289.1" x2="72" y2="289.1"/>
<line x1="68" y1="296.1" x2="72" y2="296.1"/>
<line x1="69" y1="303.2" x2="72" y2="303.2"/>
<line x1="54" y1="310.2" x2="72" y2="310.2" stroke="#d6d6d6"/>
<line x1="69" y1="317.2" x2="72" y2="317.2"/>
<line x1="68" y1="324.3" x2="72" y2="324.3"/>
<line x1="69" y1="331.3" x2="72" y2="331.3"/>
<line x1="66" y1="338.4" x2="72" y2="338.4"/>
<line x1="69" y1="345.4" x2="72" y2="345.4"/>
<line x1="68" y1="352.5" x2="72" y2="352.5"/>
<line x1="69" y1="359.6" x2="72" y2="359.6"/>
<line x1="54" y1="366.6" x2="72" y2="366.6" stroke="#d6d6d6"/>
<line x1="69" y1="373.7" x2="72" y2="373.7"/>
<line x1="68" y1="380.7" x2="72" y2="380.7"/>
<line x1="69" y1="387.8" x2="72" y2="387.8"/>
<line x1="66" y1="394.8" x2="72" y2="394.8"/>
<line x1="69" y1="401.9" x2="72" y2="401.9"/>
<line x1="68" y1="408.9" x2="72" y2="408.9"/>
<line x1="69" y1="416.0" x2="72" y2="416.0"/>
<line x1="54" y1="423.0" x2="72" y2="423.0" stroke="#d6d6d6"/>
<line x1="69" y1="430.1" x2="72" y2="430.1"/>
<line x1="68" y1="437.1" x2="72" y2="437.1"/>
<line x1="69" y1="444.1" x2="72" y2="444.1"/>
<line x1="66" y1="451.2" x2="72" y2="451.2"/>
<line x1="69" y1="458.2" x2="72" y2="458.2"/>
<line x1="68" y1="465.3" x2="72" y2="465.3"/>
<line x1="69" y1="472.4" x2="72" y2="472.4"/>
<line x1="54" y1="479.4" x2="72" y2="479.4" stroke="#d6d6d6"/>
<line x1="69" y1="486.4" x2="72" y2="486.4"/>
<line x1="68" y1="493.5" x2="72" y2="493.5"/>
<line x1="69" y1="500.5" x2="72" y2="500.5"/>
<line x1="66" y1="507.6" x2="72" y2="507.6"/>
<line x1="69" y1="514.6" x2="72" y2="514.6"/>
<line x1="68" y1="521.7" x2="72" y2="521.7"/>
<line x1="69" y1="528.8" x2="72" y2="528.8"/>
<line x1="54" y1="535.8" x2="72" y2="535.8" stroke="#d6d6d6"/>
<line x1="69" y1="542.8" x2="72" y2="542.8"/>
<line x1="68" y1="549.9" x2="72" y2="549.9"/>
<line x1="69" y1="556.9" x2="72" y2="556.9"/>
<line x1="66" y1="564.0" x2="72" y2="564.0"/>
<line x1="69" y1="571.0" x2="72" y2="571.0"/>
<line x1="68" y1="578.1" x2="72" y2="578.1"/>
<line x1="69" y1="585.1" x2="72" y2="585.1"/>
<line x1="54" y1="592.2" x2="72" y2="592.2" stroke="#d6d6d6"/>
<line x1="69" y1="599.2" x2="72" y2="599.2"/>
<line x1="68" y1="606.3" x2="72" y2="606.3"/>
<line x1="69" y1="613.4" x2="72" y2="613.4"/>
<line x1="66" y1="620.4" x2="72" y2="620.4"/>
<line x1="69" y1="627.5" x2="72" y2="627.5"/>
<line x1="68" y1="634.5" x2="72" y2="634.5"/>
<line x1="69" y1="641.6" x2="72" y2="641.6"/>
<line x1="54" y1="648.6" x2="72" y2="648.6" stroke="#d6d6d6"/>
<line x1="69" y1="655.6" x2="72" y2="655.6"/>
<line x1="68" y1="662.7" x2="72" y2="662.7"/>
<line x1="69" y1="669.7" x2="72" y2="669.7"/>
<line x1="66" y1="676.8" x2="72" y2="676.8"/>
<line x1="69" y1="683.8" x2="72" y2="683.8"/>
<line x1="68" y1="690.9" x2="72" y2="690.9"/>
<line x1="69" y1="697.9" x2="72" y2="697.9"/>
<line x1="54" y1="705.0" x2="72" y2="705.0" stroke="#d6d6d6"/>
<line x1="69" y1="712.0" x2="72" y2="712.0"/>
<line x1="68" y1="719.1" x2="72" y2="719.1"/>
<line x1="69" y1="726.1" x2="72" y2="726.1"/>
<line x1="66" y1="733.2" x2="72" y2="733.2"/>
<line x1="69" y1="740.2" x2="72" y2="740.2"/>
<line x1="68" y1="747.3" x2="72" y2="747.3"/>
<line x1="69" y1="754.4" x2="72" y2="754.4"/>
<line x1="54" y1="761.4" x2="72" y2="761.4" stroke="#d6d6d6"/>
<line x1="69" y1="768.4" x2="72" y2="768.4"/>
<line x1="68" y1="775.5" x2="72" y2="775.5"/>
<line x1="69" y1="782.5" x2="72" y2="782.5"/>
<line x1="66" y1="789.6" x2="72" y2="789.6"/>
<line x1="69" y1="796.6" x2="72" y2="796.6"/>
<line x1="68" y1="803.7" x2="72" y2="803.7"/>
<line x1="69" y1="810.8" x2="72" y2="810.8"/>
<line x1="54" y1="817.8" x2="72" y2="817.8" stroke="#d6d6d6"/>
<line x1="69" y1="824.8" x2="72" y2="824.8"/>
</g>
<g font-family="Liberation Sans, sans-serif" font-size="9" fill="#6a6a6a">
<text x="74.8" y="132.2">0</text>
<text x="131.2" y="132.2">1</text>
<text x="187.6" y="132.2">2</text>
<text x="244.0" y="132.2">3</text>
<text x="300.4" y="132.2">4</text>
<text x="356.8" y="132.2">5</text>
<text x="413.2" y="132.2">6</text>
<text x="469.6" y="132.2">7</text>
<text x="526.0" y="132.2">8</text>
<text x="582.4" y="132.2">9</text>
<text x="638.8" y="132.2">10</text>
<text x="695.2" y="132.2">11</text>
<text x="751.6" y="132.2">12</text>
<text x="808.0" y="132.2">13</text>
<text x="864.4" y="132.2">14</text>
<text x="920.8" y="132.2">15</text>
<text x="977.2" y="132.2">16</text>
<text x="1033.6" y="132.2">17</text>
<text x="1090.0" y="132.2">18</text>
<text x="1146.4" y="132.2">19</text>
<text x="1202.8" y="132.2">20</text>
<text transform="translate(63.3,148.2) rotate(-90)">0</text>
<text transform="translate(63.3,204.6) rotate(-90)">1</text>
<text transform="translate(63.3,261.0) rotate(-90)">2</text>
<text transform="translate(63.3,317.4) rotate(-90)">3</text>
<text transform="translate(63.3,373.8) rotate(-90)">4</text>
<text transform="translate(63.3,430.2) rotate(-90)">5</text>
<text transform="translate(63.3,486.6) rotate(-90)">6</text>
<text transform="translate(63.3,543.0) rotate(-90)">7</text>
<text transform="translate(63.3,599.4) rotate(-90)">8</text>
<text transform="translate(63.3,655.8) rotate(-90)">9</text>
<text transform="translate(63.3,717.2) rotate(-90)">10</text>
<text transform="translate(63.3,773.6) rotate(-90)">11</text>
</g></svg>

<svg class="abs" style="left:0;top:0" width="1500" height="841" viewBox="0 0 1500 841">
<path d="M737.5 560 Q740.8 585 737.4 601 Q737.2 607.6 744 607.6 L775 607.6 Q781.8 607.6 781.6 601 Q777 585 779 560 Z" fill="#3f2a0e"/>
<path d="M759 450 L672 455 Q666 505 694 541.5 L700 541.5 Q712 541 719.7 538.3 Q724 537 726 544 Q732 556.5 742.9 560.9 Q751 564.5 759.1 564.5 Q768 564.5 776.3 560.9 Q787 556.5 792.5 544 Q794.5 537 799.2 538.3 Q807 541 819.8 545 L826 541.5 Q852 505 846 455 Z" fill="#9ccc65" stroke="#6a9739" stroke-width="8.2" stroke-linejoin="round"/><path d="M759 450 L672 455 Q666 505 694 541.5 L700 541.5 Q712 541 719.7 538.3 Q724 537 726 544 Q732 556.5 742.9 560.9 Q751 564.5 759.1 564.5 Q768 564.5 776.3 560.9 Q787 556.5 792.5 544 Q794.5 537 799.2 538.3 Q807 541 819.8 545 L826 541.5 Q852 505 846 455 Z" fill="#9ccc65" stroke="#81af49" stroke-width="6.8" stroke-linejoin="round"/>
<path d="M759.2 341 L662.5 441.5 Q660 464 678 468.2 L697 467.4 Q704 466.5 707 463.8 Q709.5 462 712.5 465.5 Q718 474 724.5 476 Q730 477 734 471.5 Q739.5 466 743.5 471 Q750 484 759.2 484.2 Q768.5 484 775 471 Q779 466 784.5 471.5 Q788.5 477 794 476 Q800.5 474 806 465.5 Q809 462 811.5 463.8 Q814.5 466.5 821.5 467.4 L840.5 468.2 Q858.5 464 856 441.5 Z" fill="#9ccc65" stroke="#6a9739" stroke-width="8.2" stroke-linejoin="round"/><path d="M759.2 341 L662.5 441.5 Q660 464 678 468.2 L697 467.4 Q704 466.5 707 463.8 Q709.5 462 712.5 465.5 Q718 474 724.5 476 Q730 477 734 471.5 Q739.5 466 743.5 471 Q750 484 759.2 484.2 Q768.5 484 775 471 Q779 466 784.5 471.5 Q788.5 477 794 476 Q800.5 474 806 465.5 Q809 462 811.5 463.8 Q814.5 466.5 821.5 467.4 L840.5 468.2 Q858.5 464 856 441.5 Z" fill="#9ccc65" stroke="#81af49" stroke-width="6.8" stroke-linejoin="round"/>
<path d="M759.2 322 L682.4 388 Q676.6 392.8 682.4 396.4 Q693 403.5 707 404 Q722 402 734 395.5 Q738.5 393.2 740.8 398.5 Q745.5 413.8 759.2 414.2 Q773 413.8 777.6 398.5 Q780 393.2 784.4 395.5 Q796.5 402 811.4 404 Q825.5 403.5 836 396.4 Q841.8 392.8 836 388 L759.2 322 Z" fill="#9ccc65" stroke="#6a9739" stroke-width="8.2" stroke-linejoin="round"/><path d="M759.2 322 L682.4 388 Q676.6 392.8 682.4 396.4 Q693 403.5 707 404 Q722 402 734 395.5 Q738.5 393.2 740.8 398.5 Q745.5 413.8 759.2 414.2 Q773 413.8 777.6 398.5 Q780 393.2 784.4 395.5 Q796.5 402 811.4 404 Q825.5 403.5 836 396.4 Q841.8 392.8 836 388 L759.2 322 Z" fill="#9ccc65" stroke="#81af49" stroke-width="6.8" stroke-linejoin="round"/>
<path d="M759.2 294.6 L713.6 333.8 Q708.8 338 714 341 Q726 346.8 737 348.6 Q742 349.6 743.8 354 Q749 361.3 759.2 361.4 Q769.4 361.3 774.6 354 Q776.5 349.6 781.4 348.6 Q792.5 346.8 804.4 341 Q809.6 338 804.8 333.8 L759.2 294.6 Z" fill="#9ccc65" stroke="#6a9739" stroke-width="8.2" stroke-linejoin="round"/><path d="M759.2 294.6 L713.6 333.8 Q708.8 338 714 341 Q726 346.8 737 348.6 Q742 349.6 743.8 354 Q749 361.3 759.2 361.4 Q769.4 361.3 774.6 354 Q776.5 349.6 781.4 348.6 Q792.5 346.8 804.4 341 Q809.6 338 804.8 333.8 L759.2 294.6 Z" fill="#9ccc65" stroke="#81af49" stroke-width="6.8" stroke-linejoin="round"/>
<path d="M758.9 230.6 L770.5 254.2 L796 256.6 L777.1 275.6 L782.8 301.3 L759 289.4 L736.4 300.3 L741 273.6 L721.9 257.3 L746.9 253.8 Z" fill="#fdd547" stroke="#b59428" stroke-width="0.8" stroke-linejoin="miter"/>
<clipPath id="apx"><rect x="740" y="286" width="40" height="20"/></clipPath><g clip-path="url(#apx)"><path d="M759.2 294.6 L713.6 333.8 Q708.8 338 714 341 Q726 346.8 737 348.6 Q742 349.6 743.8 354 Q749 361.3 759.2 361.4 Q769.4 361.3 774.6 354 Q776.5 349.6 781.4 348.6 Q792.5 346.8 804.4 341 Q809.6 338 804.8 333.8 L759.2 294.6 Z" fill="#9ccc65" stroke="#6a9739" stroke-width="8.2" stroke-linejoin="round"/><path d="M759.2 294.6 L713.6 333.8 Q708.8 338 714 341 Q726 346.8 737 348.6 Q742 349.6 743.8 354 Q749 361.3 759.2 361.4 Q769.4 361.3 774.6 354 Q776.5 349.6 781.4 348.6 Q792.5 346.8 804.4 341 Q809.6 338 804.8 333.8 L759.2 294.6 Z" fill="#9ccc65" stroke="#81af49" stroke-width="6.8" stroke-linejoin="round"/></g>
<path d="M584 507 L591 498 L580.7 487.1 Q584 478 584.4 471 Q584.5 465.3 580.7 465.3 Q577 465.5 576.2 470 L575 474.5 Q572 467 570.6 463.5 Q568.5 457 565.5 457.1 Q561.5 457.5 561.8 462.5 L562.2 470.8 Q557 467 554 466 Q549.5 465.5 549.4 468.5 Q549.5 471 551.5 472.6 Q556 477 560 480 Q565 483.5 568.5 485.2 Q571 487 577.1 497.1 Z" fill="#4a3210" stroke="#2b1a07" stroke-width="0.9" stroke-linejoin="round"/>
<path d="M678 498 L692.6 489.2 Q692 482 692.5 476.4 Q693 470 697.6 470 Q702 470 702.5 474 L703.5 480 Q707 474 710.5 470 Q713 466.8 716 468 Q719.5 469.5 718.2 473 L714.6 481 Q718 480 721.4 480 Q727 480 727.4 483.8 Q727.5 487.5 723.5 488.8 Q717 491 712 492.2 Q706 493.8 701.4 495.2 Q696 498 685 506 Z" fill="#4a3210" stroke="#2b1a07" stroke-width="0.9" stroke-linejoin="round"/>
<ellipse cx="634.3" cy="545.5" rx="64" ry="65.3" fill="#f2f2f2" stroke="#8e8e8e" stroke-width="0.9"/>
<ellipse cx="634" cy="454" rx="41.8" ry="42.5" fill="#f2f2f2" stroke="#8e8e8e" stroke-width="0.9"/>
<path d="M590.6 472 Q634.2 495 677.8 472 Q681 483 678.4 494 Q635 529.8 591.4 494 Q587.6 483 590.6 472 Z" fill="#21849c" stroke="#196d82" stroke-width="0.7"/>
<circle cx="634.6" cy="528.9" r="6.4" fill="#21849c" stroke="#196d82" stroke-width="0.7"/>
<circle cx="634.6" cy="547.5" r="6.4" fill="#21849c" stroke="#196d82" stroke-width="0.7"/>
<circle cx="634.6" cy="566.3" r="6.4" fill="#21849c" stroke="#196d82" stroke-width="0.7"/>
<path d="M609.4 404 L658.4 404 L658 417 L634 422 L610 417 Z" fill="#f2f2f2" stroke="#8e8e8e" stroke-width="0.6"/>
<path d="M607.5 376.8 Q634.2 372 661 376.8 Q664.5 377.5 663.6 381 L658 407.8 Q634 413.5 610.2 407.8 L605 381 Q604 377.5 607.5 376.8 Z" fill="#21849c" stroke="#196d82" stroke-width="0.6"/>
<path d="M593.6 411.2 Q634 428.5 673.6 410.6 L678.6 423 Q634 447 589.6 422.8 Z" fill="#21849c" stroke="#196d82" stroke-width="0.6" stroke-linejoin="round"/>
<circle cx="619.7" cy="445.2" r="5.3" fill="#46300f" stroke="#2c1c08" stroke-width="0.8"/>
<circle cx="648.9" cy="445.2" r="5.3" fill="#46300f" stroke="#2c1c08" stroke-width="0.8"/>
<path d="M630.2 461 Q630.4 457.2 636 457.4 L661.4 458.8 Q645 464.5 635.5 464.6 Q630.2 464.6 630.2 461 Z" fill="#f1602c" stroke="#c94d20" stroke-width="0.5"/>
<circle cx="620.4" cy="465.6" r="2.3" fill="#2e1d0a"/>
<circle cx="625.4" cy="469.2" r="2.3" fill="#2e1d0a"/>
<circle cx="631.1" cy="471.3" r="2.3" fill="#2e1d0a"/>
<circle cx="637.5" cy="471.3" r="2.3" fill="#2e1d0a"/>
<circle cx="643.8" cy="470.3" r="2.3" fill="#2e1d0a"/>
<path d="M843 494.4 Q832 497 824.6 499.3 Q819 501.5 815.7 502.8 Q810 502.8 806.8 502.5 L794.9 502.2 Q787 502 786.4 506.4 Q786 511 790.5 511.4 L797.4 511.8 Q794 515.5 792.3 519 Q790.5 523 792.5 524.8 Q795 527 797.5 524.8 Q799.5 523 801 521.6 L808.5 516 Q807.8 520 808 523.2 Q808.5 528 811.8 527.9 Q815 527.6 815.8 525 Q817.5 520 819.3 515.9 L821 511.2 Q826 508.5 829.4 507 L838 504 Z" fill="#4a3210" stroke="#2b1a07" stroke-width="0.9" stroke-linejoin="round"/>
<path d="M924 494.6 Q936 497.2 943.8 499.9 Q948 501.6 951.5 503.4 Q956 502.6 961.6 502.2 L973.5 502.5 Q979.4 502.6 979.6 507 Q979.6 511 975 511.2 L968.2 511.2 Q971.5 515 973.5 518.3 Q976 522.5 973.6 524.6 Q971 526.6 968.8 524.6 L965.2 521.3 L957 515.4 Q958 519.5 958.1 523.1 Q958 527.8 954.5 527.8 Q951 527.6 950 525 Q948 520 946.2 515.9 L944.4 509 Q940 508.5 937.2 507.6 L928 504 Z" fill="#4a3210" stroke="#2b1a07" stroke-width="0.9" stroke-linejoin="round"/>
<ellipse cx="883.5" cy="546.5" rx="64.2" ry="65.5" fill="#f2f2f2" stroke="#8e8e8e" stroke-width="0.9"/>
<ellipse cx="884.4" cy="458" rx="42.6" ry="42" fill="#f2f2f2" stroke="#8e8e8e" stroke-width="0.9"/>
<path d="M840.4 475.2 Q883.5 497 926.6 474 Q930.4 483.5 926.6 494.4 Q883 531.5 841.4 495 Q836.8 484 840.4 475.2 Z" fill="#d51033" stroke="#a90c28" stroke-width="0.7"/>
<circle cx="883" cy="529.7" r="6.4" fill="#d51033" stroke="#a90c28" stroke-width="0.7"/>
<circle cx="883" cy="547.9" r="6.4" fill="#d51033" stroke="#a90c28" stroke-width="0.7"/>
<circle cx="883" cy="567" r="6.4" fill="#d51033" stroke="#a90c28" stroke-width="0.7"/>
<circle cx="941.7" cy="403.3" r="13.8" fill="#f2f2f2" stroke="#9a9a9a" stroke-width="1"/>
<path d="M853.5 420 Q857 402 871 394.5 Q883 388.5 901 390.2 Q918 392.5 929.5 400 Q925 407 923 416 Q921.5 425 926 430 L900 436 L860 432 Z" fill="#d51033" stroke="#a90c28" stroke-width="0.6"/>
<path d="M845.5 423 Q852 417.5 868 416.4 Q890 415.6 908 420.6 Q922 425 929 431.5 Q934.5 440 930.5 455 Q916 446.5 896.4 443 Q870 440.4 843.4 445 Q838.2 433 845.5 423 Z" fill="#d51033" stroke="#a90c28" stroke-width="1.1"/>
<g fill="none" stroke="#3a230d" stroke-width="2.3" stroke-linecap="round"><path d="M859.8 454.4 Q866 446.2 873.2 453.2"/><path d="M891.2 454.2 Q897.8 445.6 904.4 454.8"/><path d="M874.4 471.2 Q886 477.6 894.6 470.6 Q900.6 465.4 898.6 460.8"/><path d="M899.4 465.8 Q903.5 467.2 907 465.4" stroke-width="1.6"/></g>
<path d="M861.4 465.3 L880 456.6 Q886.4 455 887.6 459.4 Q888.2 463.8 882 464.4 Z" fill="#f1602c" stroke="#c94d20" stroke-width="0.5"/>
<path d="M1094.6 334.8 L1094.6 353.4 L1098.8 349.6 L1102.6 357.6 L1106 356 L1102.4 348.2 L1108.4 348 Z" fill="#000"/>
</svg>

<svg class="abs" style="left:0;top:0" width="1500" height="841" viewBox="0 0 1500 841">
<ellipse cx="65.2" cy="787.3" rx="52" ry="40.3" fill="#c5351c"/>
<g fill="#fff" font-family="Liberation Serif, serif" font-style="italic" font-weight="bold">
<text x="24.5" y="787.4" font-size="36" textLength="20.5" lengthAdjust="spacingAndGlyphs" font-weight="normal">C</text>
<text x="43" y="785.8" font-size="21" textLength="38" lengthAdjust="spacingAndGlyphs">raft</text>
<text x="33.4" y="814.6" font-size="38" textLength="18.5" lengthAdjust="spacingAndGlyphs" font-weight="normal">S</text>
<text x="51.6" y="812.2" font-size="20.5" textLength="45.6" lengthAdjust="spacingAndGlyphs">arah</text>
</g>
<text x="86.6" y="779.8" font-family="Liberation Serif, serif" font-weight="bold" font-size="6.6" fill="#fff" textLength="21" lengthAdjust="spacingAndGlyphs">WITH</text>
<g fill="none" stroke="#fff" stroke-linecap="round">
<path d="M87.8 784.6 Q93 781.4 98 783.6 Q103.5 786 108.2 781.6" stroke-width="1.3"/>
<path d="M71 793.6 Q80 786.6 93 790.4 Q103 794 100.6 790.6 Q97 787.6 90.6 793.4 Q86.4 797.4 84.6 803" stroke-width="1.1"/>
<path d="M75.6 797 Q71.4 798.4 71 794.6 Q71.6 791.8 75 792.4" stroke-width="0.9"/>
<path d="M60.4 786 Q59 792 56.4 792.8" stroke-width="1.2"/>
</g>
</svg>

</body>
</html>
